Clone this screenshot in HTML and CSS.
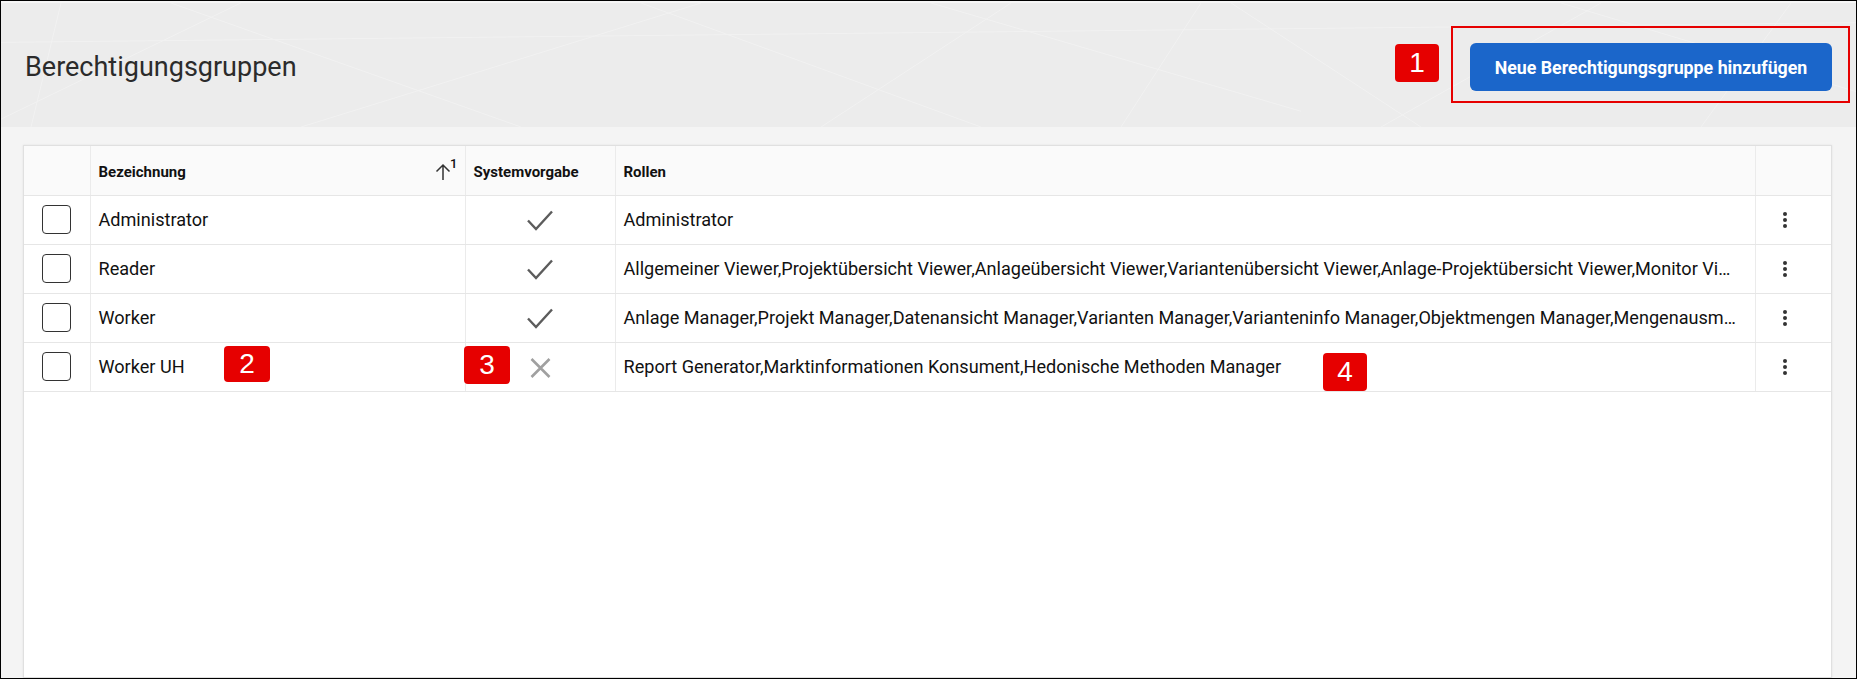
FILE: index.html
```html
<!DOCTYPE html>
<html lang="de">
<head>
    <meta charset="UTF-8">
    <meta name="viewport" content="width=device-width, initial-scale=1.0">
    <title>Berechtigungsgruppen</title>
    <link rel="stylesheet" href="styles.css">
</head>
<body>
    <div class="frame">
        <header class="page-header">
            <!-- dezentes Linienmuster im Hintergrund -->
            <svg class="header-pattern" viewBox="0 0 1855 126" preserveAspectRatio="none">
                <g stroke="#ffffff" stroke-width="1" fill="none" opacity="0.3">
                    <line x1="0" y1="118" x2="260" y2="-10"/>
                    <line x1="60" y1="0" x2="30" y2="126"/>
                    <line x1="170" y1="0" x2="520" y2="126"/>
                    <line x1="300" y1="126" x2="700" y2="0"/>
                    <line x1="640" y1="0" x2="980" y2="126"/>
                    <line x1="820" y1="126" x2="1010" y2="0"/>
                    <line x1="930" y1="0" x2="1300" y2="110"/>
                    <line x1="1120" y1="126" x2="1200" y2="0"/>
                    <line x1="1230" y1="0" x2="1420" y2="126"/>
                    <line x1="1380" y1="126" x2="1600" y2="0"/>
                    <line x1="1560" y1="0" x2="1855" y2="90"/>
                    <line x1="1700" y1="126" x2="1790" y2="0"/>
                    <line x1="0" y1="40" x2="1855" y2="20"/>
                </g>
            </svg>
            <h1 class="page-title">Berechtigungsgruppen</h1>
            <span class="marker marker-head">1</span>
            <div class="callout">
                <button class="primary-btn">Neue Berechtigungsgruppe hinzufügen</button>
            </div>
        </header>

        <main class="content">
            <div class="table-card">
                <table class="grid">
                    <colgroup>
                        <col class="col-select">
                        <col class="col-name">
                        <col class="col-default">
                        <col class="col-roles">
                        <col class="col-actions">
                    </colgroup>
                    <thead>
                        <tr>
                            <th></th>
                            <th>
                                <div class="th-sort">
                                    <span>Bezeichnung</span>
                                    <span class="sort-icon">
                                        <svg width="16" height="18" viewBox="0 0 16 18">
                                            <path d="M8 2v15M1.5 8.5L8 2l6.5 6.5" stroke="#333" stroke-width="1.5" fill="none"/>
                                        </svg>
                                        <sup>1</sup>
                                    </span>
                                </div>
                            </th>
                            <th>Systemvorgabe</th>
                            <th>Rollen</th>
                            <th></th>
                        </tr>
                    </thead>
                    <tbody>
                        <tr>
                            <td class="cell-select"><span class="checkbox"></span></td>
                            <td>Administrator</td>
                            <td class="cell-flag">
                                <svg class="icon-check" width="26" height="21" viewBox="0 0 26 21"><polyline points="1,10.5 9,19 25,1.5"/></svg>
                            </td>
                            <td class="cell-roles">Administrator</td>
                            <td class="cell-menu"><span class="kebab"><i></i><i></i><i></i></span></td>
                        </tr>
                        <tr>
                            <td class="cell-select"><span class="checkbox"></span></td>
                            <td>Reader</td>
                            <td class="cell-flag">
                                <svg class="icon-check" width="26" height="21" viewBox="0 0 26 21"><polyline points="1,10.5 9,19 25,1.5"/></svg>
                            </td>
                            <td class="cell-roles" title="Allgemeiner Viewer,Projektübersicht Viewer,Anlageübersicht Viewer,Variantenübersicht Viewer,Anlage-Projektübersicht Viewer,Monitor Viewer">Allgemeiner Viewer,Projektübersicht Viewer,Anlageübersicht Viewer,Variantenübersicht Viewer,Anlage-Projektübersicht Viewer,Monitor Vi…</td>
                            <td class="cell-menu"><span class="kebab"><i></i><i></i><i></i></span></td>
                        </tr>
                        <tr>
                            <td class="cell-select"><span class="checkbox"></span></td>
                            <td>Worker</td>
                            <td class="cell-flag">
                                <svg class="icon-check" width="26" height="21" viewBox="0 0 26 21"><polyline points="1,10.5 9,19 25,1.5"/></svg>
                            </td>
                            <td class="cell-roles" title="Anlage Manager,Projekt Manager,Datenansicht Manager,Varianten Manager,Varianteninfo Manager,Objektmengen Manager,Mengenausmaß Manager">Anlage Manager,Projekt Manager,Datenansicht Manager,Varianten Manager,Varianteninfo Manager,Objektmengen Manager,Mengenausm…</td>
                            <td class="cell-menu"><span class="kebab"><i></i><i></i><i></i></span></td>
                        </tr>
                        <tr>
                            <td class="cell-select"><span class="checkbox"></span></td>
                            <td>Worker UH</td>
                            <td class="cell-flag">
                                <svg class="icon-cross" width="21" height="20" viewBox="0 0 21 20"><path d="M1.5 1L19.5 19M19.5 1L1.5 19"/></svg>
                            </td>
                            <td class="cell-roles">Report Generator,Marktinformationen Konsument,Hedonische Methoden Manager</td>
                            <td class="cell-menu"><span class="kebab"><i></i><i></i><i></i></span></td>
                        </tr>
                    </tbody>
                </table>

                <span class="marker marker-name">2</span>
                <span class="marker marker-default">3</span>
                <span class="marker marker-roles">4</span>
            </div>
        </main>
    </div>
</body>
</html>
```

FILE: styles.css
```css
* {
    margin: 0;
    padding: 0;
    box-sizing: border-box;
}

body {
    font-family: Roboto, 'Liberation Sans', sans-serif;
    color: #111;
    background: #fff;
}

.frame {
    height: 100vh;
    border: 1px solid #000;
    display: flex;
    flex-direction: column;
    overflow: hidden;
}

/* Kopfbereich */
.page-header {
    position: relative;
    height: 126px;
    flex: none;
    display: flex;
    align-items: center;
    padding: 0 6px 0 24px;
    background-color: #ececec;
    border-top: 2px solid #f6f6f6;
}

.header-pattern {
    position: absolute;
    top: 0;
    left: 0;
    width: 100%;
    height: 100%;
}

.page-title {
    position: relative;
    flex: 1;
    font-size: 27px;
    font-weight: 400;
    color: #2b2b2b;
    margin-top: 3px;
}

.callout {
    position: relative;
    border: 2px solid #e60000;
    padding: 15px 16px 10px 17px;
    margin-top: -1px;
}

.primary-btn {
    display: block;
    width: 362px;
    height: 48px;
    border: none;
    border-radius: 6px;
    background-color: #1b66ca;
    color: #fff;
    font-family: Roboto, 'Liberation Sans', sans-serif;
    font-size: 17.8px;
    font-weight: 700;
    cursor: pointer;
}

/* Nummern-Markierungen */
.marker {
    display: inline-flex;
    align-items: center;
    justify-content: center;
    width: 44px;
    height: 38px;
    border-radius: 4px;
    background-color: #e60000;
    color: #fff;
    font-family: 'Liberation Sans', Arial, sans-serif;
    font-size: 28px;
    line-height: 1;
}

.marker-head {
    position: relative;
    margin-right: 12px;
    margin-top: -5px;
}

.marker-name,
.marker-default,
.marker-roles {
    position: absolute;
}

.marker-name {
    left: 200px;
    top: 200px;
    width: 46px;
    height: 36px;
}

.marker-default {
    left: 440px;
    top: 200px;
    width: 46px;
}

.marker-roles {
    left: 1299px;
    top: 207px;
}

/* Inhalt */
.content {
    flex: 1;
    background-color: #f4f4f4;
    padding: 18px 24px 0 22px;
    display: flex;
    min-height: 0;
}

.table-card {
    position: relative;
    flex: 1;
    background: #fff;
    border: 1px solid #e0e0e0;
    box-shadow: 0 0 2px rgba(0, 0, 0, 0.08);
}

.grid {
    width: 100%;
    table-layout: fixed;
    border-collapse: collapse;
}

.col-select { width: 66px; }
.col-name { width: 375px; }
.col-default { width: 150px; }
.col-actions { width: 76px; }

.grid th,
.grid td {
    height: 49px;
    border-bottom: 1px solid #e6e6e6;
    border-right: 1px solid #ebebeb;
    padding: 0 8px;
    text-align: left;
    vertical-align: middle;
}

.grid th:last-child,
.grid td:last-child {
    border-right: none;
}

.grid th {
    background-color: #fafafa;
    font-size: 15px;
    font-weight: 700;
    color: #111;
    padding-top: 3px;
}

.grid td {
    font-size: 18.1px;
}

.th-sort {
    display: flex;
    align-items: center;
    justify-content: space-between;
}

.sort-icon {
    display: inline-flex;
    align-items: flex-start;
    margin-right: -1px;
    margin-top: -6px;
}

.sort-icon svg {
    margin-top: 6px;
}

.sort-icon sup {
    font-size: 13px;
    font-weight: 500;
    line-height: 1;
    margin-left: -1px;
}

.cell-select {
    text-align: center !important;
}

.checkbox {
    display: inline-block;
    width: 29px;
    height: 29px;
    border: 1px solid #333;
    border-radius: 4px;
    vertical-align: middle;
}

.cell-flag {
    text-align: center !important;
}

.cell-flag svg {
    display: inline-block;
    vertical-align: middle;
    fill: none;
}

.icon-check polyline {
    stroke: #5c5c5c;
    stroke-width: 2.4;
}

.icon-cross path {
    stroke: #a0a0a0;
    stroke-width: 2.6;
}

.cell-roles {
    white-space: nowrap;
    overflow: hidden;
    text-overflow: ellipsis;
    padding-right: 14px !important;
}

.cell-menu {
    padding-left: 27px !important;
}

.kebab {
    display: flex;
    flex-direction: column;
    gap: 2px;
    width: 4px;
}

.kebab i {
    display: block;
    width: 4px;
    height: 4px;
    border-radius: 50%;
    background-color: #333;
}
```
